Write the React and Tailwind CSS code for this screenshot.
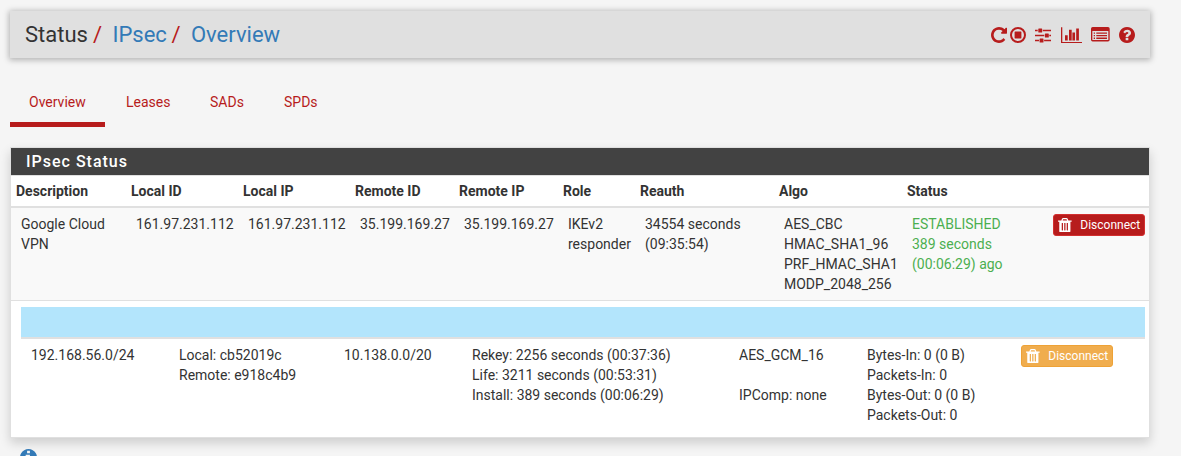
const RED = "#b71c1c";

function Glyph({ d, box, className }) {
  return (
    <svg viewBox={box} className={className} fill="currentColor" aria-hidden="true">
      <path d={d} />
    </svg>
  );
}

const TRASH =
  "M704 1376v-704q0-14-9-23t-23-9h-64q-14 0-23 9t-9 23v704q0 14 9 23t23 9h64q14 0 23-9t9-23zm256 0v-704q0-14-9-23t-23-9h-64q-14 0-23 9t-9 23v704q0 14 9 23t23 9h64q14 0 23-9t9-23zm256 0v-704q0-14-9-23t-23-9h-64q-14 0-23 9t-9 23v704q0 14 9 23t23 9h64q14 0 23-9t9-23zm-544-992h448l-48-117q-7-9-17-11h-317q-10 2-17 11zm928 32v64q0 14-9 23t-23 9h-96v948q0 83-47 143.500t-113 60.500h-832q-66 0-113-58.500t-47-141.500v-952h-96q-14 0-23-9t-9-23v-64q0-14 9-23t23-9h309l70-167q15-37 54-63t79-26h320q40 0 79 26t54 63l70 167h309q14 0 23 9t9 23z";
const REPEAT =
  "M1664 256v448q0 26-19 45t-45 19h-448q-42 0-59-40-17-39 14-69l138-138q-148-137-349-137-104 0-198.500 40.500t-163.500 109.500-109.500 163.500-40.500 198.500 40.500 198.500 109.500 163.500 163.500 109.500 198.500 40.500q119 0 225-52t179-147q7-10 23-12 15 0 25 9l137 138q9 8 9.500 20.500t-7.500 22.500q-109 132-264 204.500t-327 72.500q-156 0-298-61t-245-164-164-245-61-298 61-298 164-245 245-164 298-61q147 0 284.500 55.500t244.500 156.500l130-129q29-31 70-14 39 17 39 59z";
const QUESTION =
  "M1024 1376v-192q0-14-9-23t-23-9h-192q-14 0-23 9t-9 23v192q0 14 9 23t23 9h192q14 0 23-9t9-23zm256-672q0-88-55.500-163t-138.500-116-170-41q-243 0-371 213-15 24 8 42l132 100q7 6 19 6 16 0 25-12 53-68 86-92 34-24 86-24 48 0 85.500 26t37.500 59q0 38-20 61t-68 45q-63 28-115.500 86.500t-52.500 125.500v36q0 14 9 23t23 9h192q14 0 23-9t9-23q0-19 21.500-49.500t54.500-49.500q32-18 49-28.500t46-35 44.500-48 28-60.500 12.500-81zm384 192q0 209-103 385.500t-279.500 279.500-385.500 103-385.500-103-279.500-279.500-103-385.500 103-385.500 279.500-279.500 385.500-103 385.500 103 279.500 279.500 103 385.500z";
const INFO =
  "M1152 1376v-160q0-14-9-23t-23-9h-96v-512q0-14-9-23t-23-9h-320q-14 0-23 9t-9 23v160q0 14 9 23t23 9h96v320h-96q-14 0-23 9t-9 23v160q0 14 9 23t23 9h448q14 0 23-9t9-23zm-128-896v-160q0-14-9-23t-23-9h-192q-14 0-23 9t-9 23v160q0 14 9 23t23 9h192q14 0 23-9t9-23zm640 416q0 209-103 385.500t-279.500 279.500-385.500 103-385.500-103-279.500-279.500-103-385.500 103-385.500 279.500-279.500 385.500-103 385.500 103 279.500 279.500 103 385.500z";

function StopCircle() {
  return (
    <svg viewBox="0 0 16 16" className="ml-[3px] size-4" aria-hidden="true">
      <circle cx="8" cy="8" r="7" fill="none" stroke={RED} strokeWidth="2" />
      <rect x="4.6" y="4.6" width="6.8" height="6.8" rx="0.4" fill={RED} />
    </svg>
  );
}

function Sliders() {
  return (
    <svg viewBox="0 0 16 16" className="ml-[9px] size-4" fill={RED} aria-hidden="true">
      <path d="M0 2.8h2.7v1.4H0zM7.8 2.800H16v1.4H7.800zM0 7.800h9.300v1.4H0zM14.300 7.800H16v1.4h-1.700zM0 12.800h4v1.4H0zM9.100 12.800H16v1.4H9.100z" />
      <rect x="3.3" y="1.5" width="3.9" height="4" rx="0.6" />
      <rect x="9.9" y="6.5" width="3.9" height="4" rx="0.6" />
      <rect x="4.6" y="11.5" width="3.9" height="4" rx="0.6" />
    </svg>
  );
}

function BarChart() {
  return (
    <svg viewBox="0 0 21 16" className="ml-[10px] h-4 w-[21px]" fill={RED} aria-hidden="true">
      <path d="M0 .2h1.300v14.700H21v1.100H0zM4 8.300h2.700v5.200H4zM8 2.700h2.700v10.800H8zM11.400 5.600h2.600v7.900h-2.600zM15.200 1.400h2.700v12.100h-2.700z" />
    </svg>
  );
}

function ListAlt() {
  return (
    <svg viewBox="0 0 18.7 16" className="ml-[9px] h-4 w-[18.7px]" fill={RED} aria-hidden="true">
      <path
        fillRule="evenodd"
        d="M1.7 .1h15.3a1.7 1.7 0 0 1 1.7 1.700v10.900a1.700 1.700 0 0 1-1.700 1.700H1.700a1.700 1.700 0 0 1-1.700-1.700V1.800A1.700 1.700 0 0 1 1.700 .1zM1.350 4.100v8.600q0 .350 .350 .350h15.300q.350 0 .350-.350V4.100z"
      />
      <path d="M2.7 5.400H4v1.300H2.700zM5.300 5.400H16v1.300H5.300zM2.700 8H4v1.300H2.700zM5.300 8H16v1.300H5.300zM2.700 10.600H4v1.300H2.700zM5.300 10.600H16v1.300H5.300z" />
    </svg>
  );
}

function DisconnectButton({ className }) {
  return (
    <button
      type="button"
      className={`flex h-[22px] w-[92px] items-center rounded-[3px] border pl-1 text-[12px] leading-[18px] text-white ${className}`}
    >
      <Glyph d={TRASH} box="192 128 1408 1536" className="h-[14.9px] w-[13.7px]" />
      <span className="ml-[8.6px]">Disconnect</span>
    </button>
  );
}

function Lines({ items, className = "" }) {
  return (
    <div className={`whitespace-nowrap ${className}`}>
      {items.map((t, i) => (
        <div key={i} className="h-5">
          {t}
        </div>
      ))}
    </div>
  );
}

const HEADS = ["Description", "Local ID", "Local IP", "Remote ID", "Remote IP", "Role", "Reauth", "Algo", "Status"];
const CELLS = [
  ["Google Cloud", "VPN"],
  ["161.97.231.112"],
  ["161.97.231.112"],
  ["35.199.169.27"],
  ["35.199.169.27"],
  ["IKEv2", "responder"],
  ["34554 seconds", "(09:35:54)"],
  ["AES_CBC", "HMAC_SHA1_96", "PRF_HMAC_SHA1", "MODP_2048_256"],
];
const COLS = "grid grid-cols-[115px_112px_112px_104px_104px_77px_139px_128px_140px_1fr]";

export default function App() {
  return (
    <div className="h-[456px] overflow-hidden bg-[#f5f5f5] pt-[11px] pl-[10px] font-[Roboto,sans-serif] text-[14px] leading-5 text-[#333]">
      <header className="flex h-[47px] w-[1140px] items-center justify-between bg-[#e0e0e0] pr-[15px] pl-[15px] shadow-[0_1px_6px_1px_rgba(0,0,0,0.28)]">
        <nav className="flex pt-px text-[22px] leading-6 whitespace-nowrap">
          <span>Status</span>
          <span className="ml-[5px] text-[#b71c1c]">/</span>
          <a className="ml-[10.5px] text-[#337ab7]">IPsec</a>
          <span className="ml-[4.5px] text-[#b71c1c]">/</span>
          <a className="ml-[10.5px] text-[#337ab7]">Overview</a>
        </nav>
        <div className="flex items-center text-[#b71c1c]">
          <Glyph d={REPEAT} box="128 128 1536 1536" className="size-4" />
          <StopCircle />
          <Sliders />
          <BarChart />
          <ListAlt />
          <Glyph d={QUESTION} box="128 128 1536 1536" className="ml-[9px] size-4" />
        </div>
      </header>

      <nav className="mt-[24px] flex h-[45px] leading-5 text-[#b71c1c]">
        <a className="w-[95px] border-b-5 border-[#b71c1c] pt-[10px] pl-[19px]">Overview</a>
        <a className="w-[84px] pt-[10px] pl-[21px]">Leases</a>
        <a className="w-[74px] pt-[10px] pl-[21px]">SADs</a>
        <a className="pt-[10px] pl-[21px]">SPDs</a>
      </nav>

      <section className="mt-[20px] h-[291px] w-[1140px] border border-[#e0e0e0] bg-white shadow-[0_5px_10px_rgba(0,0,0,0.16)]">
        <h2 className="h-[27px] bg-[#424242] pl-[15px] text-[16px] leading-[27px] font-medium tracking-[1px] text-white">
          IPsec Status
        </h2>
        <div className={`${COLS} h-[33px] border-t border-b-2 border-[#e0e0e0] pt-[5px] font-bold`}>
          {HEADS.map((h) => (
            <div key={h} className="pl-[5px]">
              {h}
            </div>
          ))}
        </div>
        <div className={`${COLS} h-[93px] border-b border-[#e0e0e0] bg-[#f9f9f9] pt-[6px]`}>
          {CELLS.map((c, i) => (
            <Lines key={i} items={c} className="pl-[10px]" />
          ))}
          <Lines items={["ESTABLISHED", "389 seconds", "(00:06:29) ago"]} className="pl-[10px] text-[#4caf50]" />
          <div className="pl-[11px]">
            <DisconnectButton className="border-[#d32f2f] bg-[#b71c1c]" />
          </div>
        </div>
        <div className="pt-[6px] pr-[4px] pl-[10px]">
          <div className="h-[32px] border-b-2 border-[#e0e0e0] bg-[#b3e5fc]" />
          <div className="grid grid-cols-[148px_165px_128px_267px_128px_154px_1fr] pt-[6px] pl-[10px]">
            <Lines items={["192.168.56.0/24"]} />
            <Lines items={["Local: cb52019c", "Remote: e918c4b9"]} />
            <Lines items={["10.138.0.0/20"]} />
            <Lines items={["Rekey: 2256 seconds (00:37:36)", "Life: 3211 seconds (00:53:31)", "Install: 389 seconds (00:06:29)"]} />
            <Lines items={["AES_GCM_16", "", "IPComp: none"]} />
            <Lines items={["Bytes-In: 0 (0 B)", "Packets-In: 0", "Bytes-Out: 0 (0 B)", "Packets-Out: 0"]} />
            <DisconnectButton className="border-[#eea236] bg-[#f0ad4e]" />
          </div>
        </div>
      </section>

      <Glyph d={INFO} box="128 128 1536 1536" className="mt-[11px] ml-[10px] size-[17px] text-[#337ab7]" />
    </div>
  );
}
